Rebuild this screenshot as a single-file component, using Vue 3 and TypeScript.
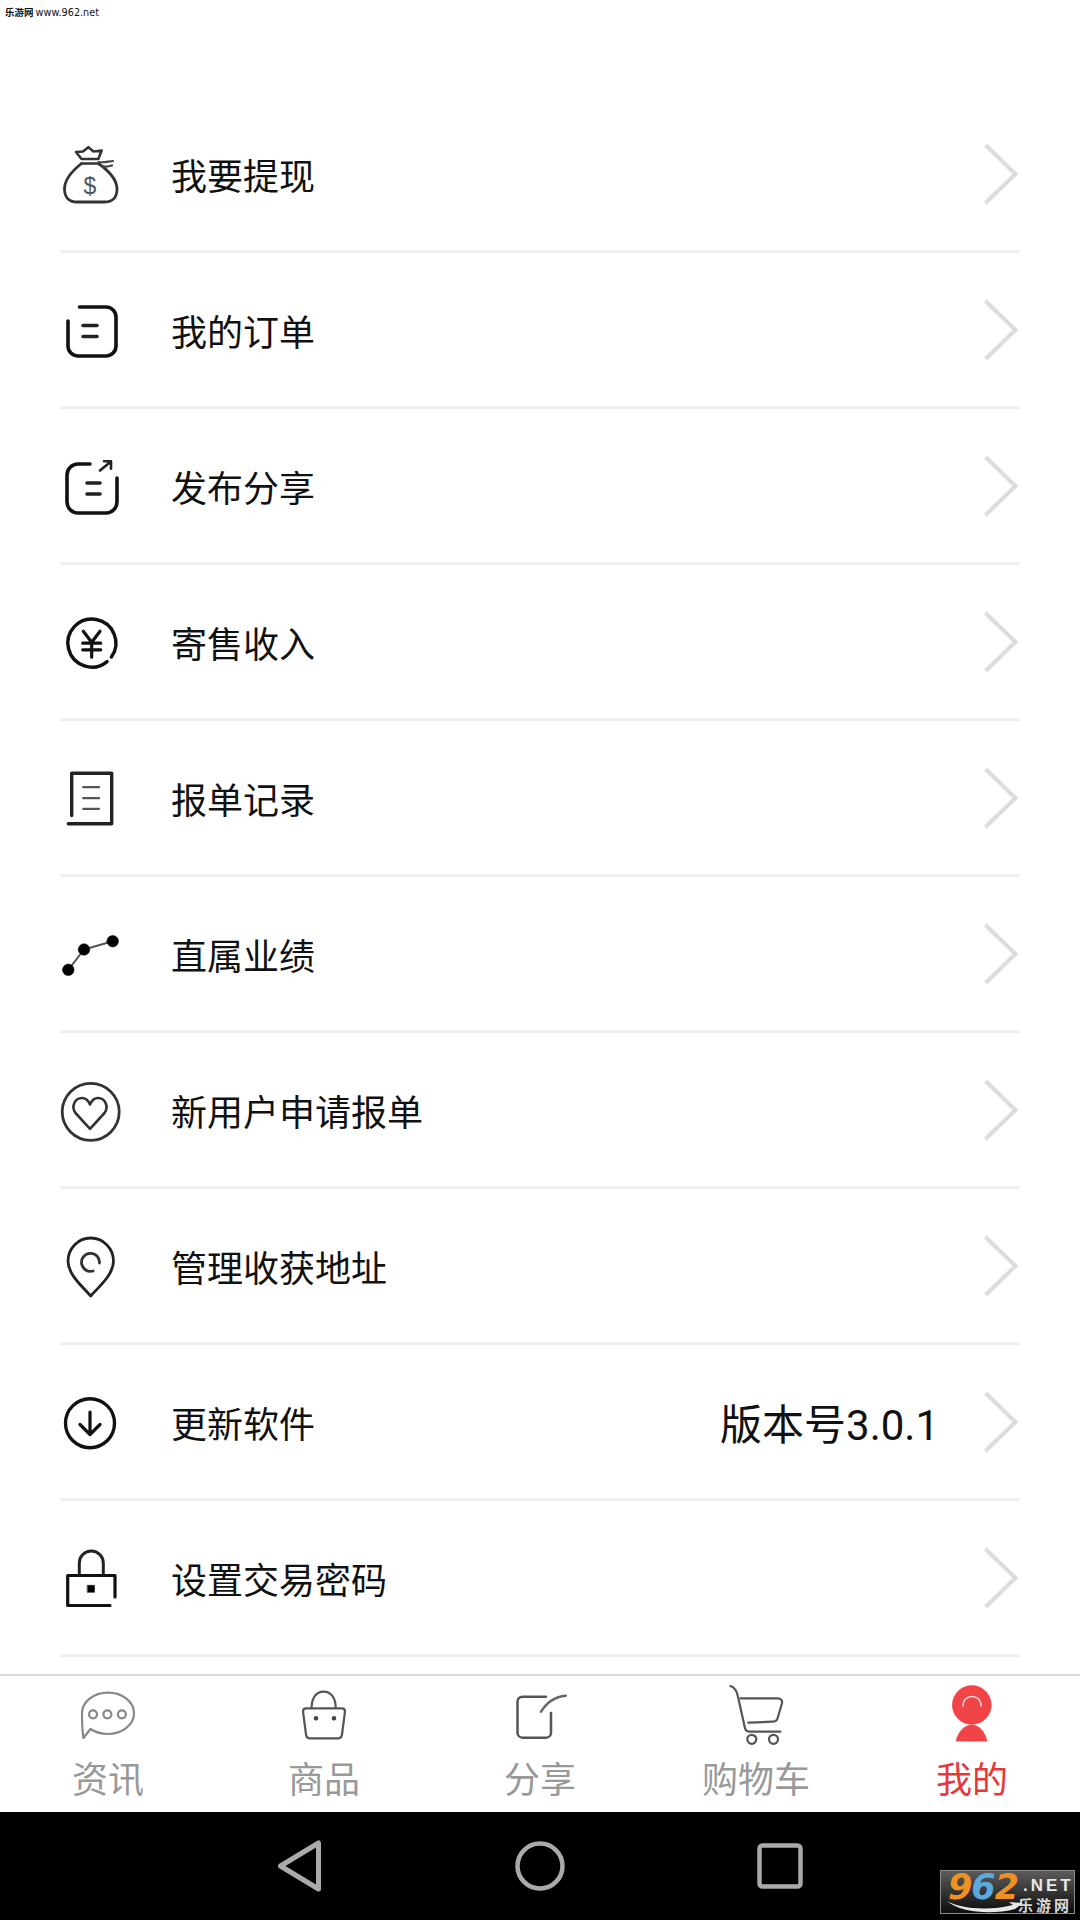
<template>
  <div class="page">
    <div class="list">
      <div class="watermark"><span class="wm-cn">乐游网</span> www.962.net</div>
      <div v-for="row in rows" :key="row.label" class="row">
        <svg class="row-icon" width="64" height="64" viewBox="0 0 64 64" fill="none" stroke-linecap="round" stroke-linejoin="round">
          <path
            v-for="(s, i) in row.shapes"
            :key="i"
            :d="s.d"
            :stroke="s.color || '#222'"
            :stroke-width="s.width || 3"
            :fill="s.fill || 'none'"
          />
          <text v-if="row.dollar" x="30" y="52" class="dollar">$</text>
        </svg>
        <span class="row-label">{{ row.label }}</span>
        <span v-if="row.extra" class="row-extra">{{ row.extra }}</span>
        <svg class="chevron" width="36" height="64" viewBox="0 0 36 64" fill="none">
          <path d="M3.5 3 L33.5 32 L3.5 61" stroke="#dcdcdc" stroke-width="4" />
        </svg>
      </div>
    </div>

    <div class="tabbar">
      <div v-for="tab in tabs" :key="tab.label" class="tab" :class="{ active: tab.active }">
        <svg width="80" height="66" viewBox="0 0 80 66" fill="none" stroke-linecap="round" stroke-linejoin="round">
          <path
            v-for="(s, i) in tab.shapes"
            :key="i"
            :d="s.d"
            :stroke="s.color || 'none'"
            :stroke-width="s.width || 2.2"
            :fill="s.fill || 'none'"
          />
        </svg>
        <span class="tab-label">{{ tab.label }}</span>
      </div>
    </div>

    <div class="navbar">
      <div class="nav-btn">
        <svg width="50" height="56" viewBox="0 0 50 56" fill="none">
          <path d="M43.5 5 L43.5 51 L5.5 28 Z" stroke="#aaa" stroke-width="5" stroke-linejoin="round" />
        </svg>
      </div>
      <div class="nav-btn">
        <svg width="52" height="52" viewBox="0 0 52 52" fill="none">
          <circle cx="26" cy="26" r="22.5" stroke="#aaa" stroke-width="4.5" />
        </svg>
      </div>
      <div class="nav-btn">
        <svg width="46" height="46" viewBox="0 0 46 46" fill="none">
          <rect x="2.5" y="2.5" width="41" height="41" rx="3" stroke="#aaa" stroke-width="4.5" />
        </svg>
      </div>
    </div>

    <!-- site badge sits on top of the nav bar -->
    <div class="badge">
      <div class="badge-num"><span class="orange">9</span><span class="blue">6</span><span class="orange">2</span></div>
      <div class="badge-side">
        <div class="badge-net">.NET</div>
        <div class="badge-cn">乐游网</div>
      </div>
      <svg class="badge-swoosh" width="76" height="14" viewBox="0 0 76 14">
        <path d="M0 1 C14 9 42 11 66 5 L62 2 L76 3 L68 9 C46 15 14 13 0 1 Z" fill="#e8e8e8" />
      </svg>
    </div>
  </div>
</template>

<script setup lang="ts">
interface Shape {
  d: string
  width?: number
  color?: string
  fill?: string
}

interface Row {
  label: string
  extra?: string
  dollar?: boolean
  shapes: Shape[]
}

interface Tab {
  label: string
  active?: boolean
  shapes: Shape[]
}

const circle = (cx: number, cy: number, r: number) =>
  `M${cx - r} ${cy} A${r} ${r} 0 1 1 ${cx + r} ${cy} A${r} ${r} 0 1 1 ${cx - r} ${cy} Z`

const rows: Row[] = [
  {
    label: '我要提现',
    dollar: true,
    shapes: [
      { d: 'M21.5 17 L16 10 L23 9.5 L28.3 5.2 L33.5 9.5 L41.7 8.5 L38.3 17 Z', width: 2.6, color: '#333' },
      { d: 'M21.5 21.5 C12 29 4.5 38 4.5 47 C4.5 56 10 60 17 60 H45 C52 60 57 56 57 47 C57 38 49 29 38.5 21.5', width: 2.8, color: '#333' },
      { d: 'M21.5 21.5 H38.5', width: 2.6, color: '#333' },
      { d: 'M38.5 20 C43 21 48 19.5 53 19', width: 2.2, color: '#444' },
      { d: 'M42 24 C45 25 49 24.5 52 23.5', width: 2.2, color: '#444' }
    ]
  },
  {
    label: '我的订单',
    shapes: [
      { d: 'M19.5 9 H46 A10 10 0 0 1 56 19 V48 A10 10 0 0 1 46 58 H18 A10 10 0 0 1 8 48 V23', width: 3.6, color: '#111' },
      { d: 'M23 27.5 H37 M23 38.5 H37', width: 3.6, color: '#222' }
    ]
  },
  {
    label: '发布分享',
    shapes: [
      { d: 'M30 10 H18 A11 11 0 0 0 7 21 V48 A11 11 0 0 0 18 59 H46 A11 11 0 0 0 57 48 V24', width: 3.6, color: '#111' },
      { d: 'M27 29 H40 M27 40 H40', width: 3.6, color: '#222' },
      { d: 'M40 16.5 L51 7.5 M44 7.2 H51 V14.8', width: 2.6, color: '#222' }
    ]
  },
  {
    label: '寄售收入',
    shapes: [
      { d: 'M47.1 51.6 A24 24 0 1 1 51.4 47', width: 3.4, color: '#111' },
      { d: 'M23.3 21.2 L31.7 32.2 L40 21.2 M22.7 33.2 H40.7 M22.7 39.8 H40.7 M31.7 32.2 V47.2', width: 3.2, color: '#111' }
    ]
  },
  {
    label: '报单记录',
    shapes: [
      { d: 'M11.7 49.5 V7.2 H51.7 V57.8 H8.3', width: 3.4, color: '#222' },
      { d: 'M23.3 21.2 H39 M23.3 32.2 H39 M23.3 42.8 H39', width: 2.3, color: '#555' }
    ]
  },
  {
    label: '直属业绩',
    shapes: [
      { d: 'M8.3 47.8 L24 27.5 L52.7 19.2', width: 2, color: '#555' },
      { d: circle(8.3, 47.8, 5.8), width: 0.5, color: '#000', fill: '#000' },
      { d: circle(24, 27.5, 5.8), width: 0.5, color: '#000', fill: '#000' },
      { d: circle(52.7, 19.2, 5.8), width: 0.5, color: '#000', fill: '#000' }
    ]
  },
  {
    label: '新用户申请报单',
    shapes: [
      { d: circle(30.7, 33.8, 28.5), width: 2.8, color: '#333' },
      { d: 'M30 50.8 L15.5 35 C11 29 14.5 20 22 20 C26 20 28.5 23 30 26.5 C31.5 23 34 20 38 20 C45.5 20 49 29 44.5 35 Z', width: 2.6, color: '#333' }
    ]
  },
  {
    label: '管理收获地址',
    shapes: [
      { d: 'M30.7 62 C24 54 8 41 8 27.3 C8 14 18.5 4 30.7 4 C43 4 53.5 14 53.5 27.3 C53.5 41 37.5 54 30.7 62 Z', width: 2.8, color: '#222' },
      { d: 'M39.5 29 A9 9 0 1 0 33 37', width: 2.8, color: '#333' }
    ]
  },
  {
    label: '更新软件',
    extra: '版本号3.0.1',
    shapes: [
      { d: circle(30, 33.2, 24.5), width: 3.4, color: '#111' },
      { d: 'M30 22.2 V44 M20 34.5 L30 44.5 L40 34.5', width: 3.2, color: '#111' }
    ]
  },
  {
    label: '设置交易密码',
    shapes: [
      { d: 'M19.3 29.5 V17 A12 12 0 0 1 43.3 17 V29.5', width: 3, color: '#222' },
      { d: 'M55 51 V29.5 H7.7 V59.5 H50', width: 3.2, color: '#111' },
      { d: 'M27.5 39.3 H34.5 V46.3 H27.5 Z', width: 0.5, color: '#000', fill: '#000' }
    ]
  }
]

const tabs: Tab[] = [
  {
    label: '资讯',
    shapes: [
      { d: 'M15.5 58 C14 50 14 42 14 33.3 C14 21.8 25.6 12.7 40 12.7 S66 21.8 66 33.3 S54.4 54 40 54 C33 54 27 52 22.5 49 Z', color: '#888' },
      { d: circle(25, 34.3, 4), color: '#888' },
      { d: circle(39.4, 34.3, 4), color: '#888' },
      { d: circle(53.9, 34.3, 4), color: '#888' }
    ]
  },
  {
    label: '商品',
    shapes: [
      { d: 'M22 28.3 H58 Q61 28.3 61 31.5 L58 54.5 Q57.5 58.3 54 58.3 H26 Q22.5 58.3 22 54.5 L19 31.5 Q19 28.3 22 28.3 Z', color: '#555' },
      { d: 'M27.6 28 C27.6 18 32 11.7 39.6 11.7 S51.7 18 51.7 28', color: '#555' },
      { d: circle(32, 38.3, 1.2), color: '#444', fill: '#444' },
      { d: circle(50, 38.3, 1.2), color: '#444', fill: '#444' }
    ]
  },
  {
    label: '分享',
    shapes: [
      { d: 'M46 16.7 H22.5 A5 5 0 0 0 17.5 21.7 V52.7 A5 5 0 0 0 22.5 57.7 H46 A5 5 0 0 0 51 52.7 V33', color: '#555', width: 2.5 },
      { d: 'M41 31.7 C47 22 55 16.5 65.7 15.7', color: '#666', width: 2.5 }
    ]
  },
  {
    label: '购物车',
    shapes: [
      { d: 'M14.4 6 C19 7.5 21 11 22 16.7 L29 48.3 C29.6 50.8 31 51.7 34 51.7 H64.4', color: '#555' },
      { d: 'M24.4 18.3 H61.6 C65 18.3 66.5 20.5 66 23.3 L61.5 38.5 C60.9 41 59 41.7 56 41.7 L32.3 42.7', color: '#555' },
      { d: circle(35.8, 59.3, 4.5), color: '#555' },
      { d: circle(57.5, 59.3, 4.5), color: '#555' }
    ]
  },
  {
    label: '我的',
    active: true,
    shapes: [
      { d: circle(39.8, 25, 19.5), color: '#f04447', fill: '#f04447', width: 0.5 },
      { d: 'M24 61 C26 52 32 45 39.8 45 S53 52 55 61 Z', color: '#f04447', fill: '#f04447', width: 0.5 },
      { d: 'M31 26 C31 19 36 16.5 40 16.5 S49 19 49 26', color: '#fbd0d0', width: 1.6 }
    ]
  }
]
</script>

<style scoped>
.page {
  position: relative;
  width: 1080px;
  height: 1920px;
  display: flex;
  flex-direction: column;
  background: #fff;
  font-family: Roboto, "Noto Sans CJK SC", sans-serif;
}

.list {
  flex: 1;
  min-height: 0;
  padding: 0 60px;
}

.watermark {
  height: 97px;
  margin-left: -55px;
  padding-top: 6px;
  box-sizing: border-box;
  font-family: "DejaVu Sans", "Noto Sans CJK SC", sans-serif;
  font-size: 9.7px;
  font-weight: 500;
  line-height: 12px;
  word-spacing: -1px;
  color: #111;
}

.wm-cn {
  font-family: "Noto Sans CJK SC", sans-serif;
  font-size: 9.5px;
  font-weight: 700;
}

.row {
  height: 153px;
  display: flex;
  align-items: center;
  border-bottom: 3px solid #efefef;
}

.row-icon {
  flex: none;
  width: 64px;
  margin-right: 47px;
}

.dollar {
  font-family: "Liberation Sans", sans-serif;
  font-size: 23px;
  fill: #555;
  text-anchor: middle;
}

.row-label {
  flex: 1;
  padding-top: 9px;
  font-size: 36px;
  line-height: 44px;
  color: #111;
}

.row-extra {
  margin-right: 43px;
  padding-top: 8px;
  font-size: 42px;
  line-height: 50px;
  color: #111;
}

.chevron {
  flex: none;
  margin-right: 2px;
}

.tabbar {
  flex: none;
  height: 138px;
  box-sizing: border-box;
  display: flex;
  border-top: 2px solid #d8d8d8;
  padding-top: 4px;
  background: #fff;
}

.tab {
  flex: 1;
  display: flex;
  flex-direction: column;
  align-items: center;
}

.tab svg {
  flex: none;
}

.tab-label {
  margin-top: 13px;
  font-size: 36px;
  line-height: 44px;
  color: #999;
}

.tab.active .tab-label {
  color: #e5383b;
}

.navbar {
  flex: none;
  height: 108px;
  display: flex;
  justify-content: center;
  background: #000;
}

.nav-btn {
  width: 240px;
  height: 108px;
  display: flex;
  align-items: center;
  justify-content: center;
}

.badge {
  position: absolute;
  left: 940px;
  top: 1870px;
  width: 135px;
  height: 44px;
  box-sizing: border-box;
  display: flex;
  border: 1px solid #8a8a8a;
  background: linear-gradient(180deg, #5c5c5c 0%, #2c2c2c 60%, #0c0c0c 100%);
  padding-left: 7px;
}

.badge-num {
  flex: none;
  width: 75px;
  font-family: "DejaVu Sans", sans-serif;
  font-size: 35px;
  line-height: 33px;
  font-weight: 700;
  font-style: italic;
  letter-spacing: -1px;
}

.orange {
  color: #ee9323;
}

.blue {
  color: #5aa9dc;
}

.badge-side {
  display: flex;
  flex-direction: column;
  align-items: flex-start;
}

.badge-net {
  font-family: "Liberation Sans", sans-serif;
  font-size: 17px;
  line-height: 18px;
  margin-top: 6px;
  font-weight: 700;
  letter-spacing: 3px;
  color: #e8e8e8;
}

.badge-cn {
  font-family: "Noto Sans CJK SC", sans-serif;
  font-size: 15px;
  line-height: 16px;
  margin-top: 2px;
  margin-left: -5px;
  font-weight: 700;
  letter-spacing: 3px;
  color: #d8d8d8;
}

.badge-swoosh {
  position: absolute;
  left: 6px;
  top: 29px;
}
</style>

<style>
html,
body {
  margin: 0;
  background: #fff;
}
</style>
